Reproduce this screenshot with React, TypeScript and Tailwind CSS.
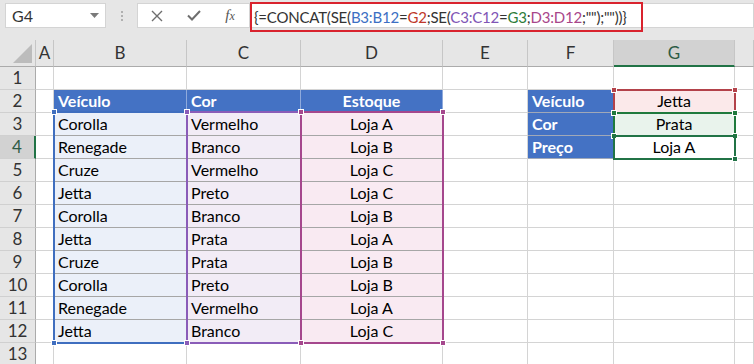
import React from 'react';

const COLS = ['A', 'B', 'C', 'D', 'E', 'F', 'G', 'H'];

const DATA: [string, string, string][] = [
  ['Corolla', 'Vermelho', 'Loja A'],
  ['Renegade', 'Branco', 'Loja B'],
  ['Cruze', 'Vermelho', 'Loja C'],
  ['Jetta', 'Preto', 'Loja C'],
  ['Corolla', 'Branco', 'Loja B'],
  ['Jetta', 'Prata', 'Loja A'],
  ['Cruze', 'Prata', 'Loja B'],
  ['Corolla', 'Preto', 'Loja B'],
  ['Renegade', 'Vermelho', 'Loja A'],
  ['Jetta', 'Branco', 'Loja C'],
];

const LOOKUP: Record<number, [string, string]> = {
  2: ['Veículo', 'Jetta'],
  3: ['Cor', 'Prata'],
  4: ['Preço', 'Loja A'],
};

const base =
  'border-r border-b border-[#d4d4d4] text-[16px] leading-[22px] whitespace-nowrap overflow-hidden text-black px-[4px] flex items-end';

function cellInfo(row: number, col: string): { text: string; cls: string } {
  // table B2:D12
  if (row === 2 && (col === 'B' || col === 'C' || col === 'D')) {
    const text = col === 'B' ? 'Veículo' : col === 'C' ? 'Cor' : 'Estoque';
    return {
      text,
      cls:
        col === 'D'
          ? 'border-b border-r border-[#8faadc] bg-[#4472c4] text-white font-bold text-[16px] leading-[22px] flex items-end justify-center'
          : 'border-b border-r border-[#8faadc] bg-[#4472c4] text-white font-bold text-[16px] leading-[22px] flex items-end px-[4px]',
    };
  }
  if (row >= 3 && row <= 12) {
    const d = DATA[row - 3];
    if (col === 'B') return { text: d[0], cls: base + ' bg-[#ebf0f9] border-b-[#a6a6a6] border-r-[#a6a6a6]' };
    if (col === 'C') return { text: d[1], cls: base + ' bg-[#f2ecf6] border-b-[#a6a6a6] border-r-[#a6a6a6]' };
    if (col === 'D') return { text: d[2], cls: base + ' bg-[#f9eaf2] border-b-[#a6a6a6] border-r-[#a6a6a6] justify-center' };
  }
  const lk = LOOKUP[row];
  if (lk && col === 'F') {
    return {
      text: lk[0],
      cls: 'border-b border-r border-b-[#a0a8b8] border-r-[#a0a8b8] bg-[#4472c4] text-white font-bold text-[16px] leading-[22px] flex items-end px-[4px]',
    };
  }
  if (lk && col === 'G') {
    const bg = row === 2 ? ' bg-[#fbe9ea]' : row === 3 ? ' bg-[#e9f3ec]' : ' bg-white';
    return { text: lk[1], cls: base + bg + ' justify-center' };
  }
  return { text: '', cls: base + ' bg-white' };
}

function Handle({ x, y, color }: { x: number; y: number; color: string }) {
  return (
    <div
      className="absolute w-[6px] h-[6px] border border-white"
      style={{ left: x - 3, top: y - 3, backgroundColor: color }}
    />
  );
}

function Range({
  x,
  y,
  w,
  h,
  color,
  corners,
}: {
  x: number;
  y: number;
  w: number;
  h: number;
  color: string;
  corners: ('tl' | 'tr' | 'bl' | 'br')[];
}) {
  return (
    <>
      <div
        className="absolute border-2 pointer-events-none"
        style={{ left: x - 1, top: y - 1, width: w + 2, height: h + 2, borderColor: color }}
      />
      {corners.includes('tl') && <Handle x={x} y={y} color={color} />}
      {corners.includes('tr') && <Handle x={x + w} y={y} color={color} />}
      {corners.includes('bl') && <Handle x={x} y={y + h} color={color} />}
      {corners.includes('br') && <Handle x={x + w} y={y + h} color={color} />}
    </>
  );
}

function Formula() {
  return (
    <span className="text-[15px] text-[#333] tracking-[-0.2px]">
      {'{=CONCAT(SE('}
      <span className="text-[#3c6fc3]">B3:B12</span>
      {'='}
      <span className="text-[#c0392b]">G2</span>
      {';SE('}
      <span className="text-[#7f55b5]">C3:C12</span>
      {'='}
      <span className="text-[#2e7d3a]">G3</span>
      {';'}
      <span className="text-[#a8468a]">D3:D12</span>
      {';"");""))}'}
    </span>
  );
}

export default function App() {
  const rows = Array.from({ length: 13 }, (_, i) => i + 1);

  return (
    <div className="w-[754px] h-[364px] overflow-hidden bg-white font-['Lato',sans-serif]">
      {/* formula bar */}
      <div className="h-[40px] bg-[#e6e6e6] flex items-start pt-[3px] pl-[5px]">
        <div className="w-[101px] h-[25px] bg-white border border-[#d4d4d4] flex items-center justify-between px-[6px]">
          <span className="text-[16px] text-[#333]">G4</span>
          <svg width="9" height="5" viewBox="0 0 9 5">
            <path d="M0 0 L9 0 L4.5 5 Z" fill="#7a7a7a" />
          </svg>
        </div>
        <div className="w-[31px] h-[25px] flex flex-col items-center justify-center gap-[2px]">
          <span className="w-[2px] h-[2px] bg-[#b0b0b0]" />
          <span className="w-[2px] h-[2px] bg-[#b0b0b0]" />
          <span className="w-[2px] h-[2px] bg-[#b0b0b0]" />
        </div>
        <div className="w-[113px] h-[25px] bg-white border border-[#d4d4d4] flex items-center">
          <div className="w-[38px] flex justify-center">
            <svg width="12" height="12" viewBox="0 0 12 12">
              <path d="M1 1 L11 11 M11 1 L1 11" stroke="#6e6e6e" strokeWidth="1.4" />
            </svg>
          </div>
          <div className="w-[36px] flex justify-center">
            <svg width="14" height="11" viewBox="0 0 14 11">
              <path d="M1 5.5 L5 9.5 L13 1" stroke="#6e6e6e" strokeWidth="2" fill="none" />
            </svg>
          </div>
          <div className="w-[36px] flex justify-center">
            <span className="font-['Liberation_Serif',serif] italic text-[15px] text-[#555]">
              f<span className="text-[12px]">x</span>
            </span>
          </div>
        </div>
        <div className="flex-1 h-[25px] bg-white border border-[#d4d4d4] border-l-0">
          <div className="w-[393px] h-[30px] -mt-[2px] border-2 border-[#d9232e] flex items-center pl-[2px]">
            <Formula />
          </div>
        </div>
      </div>

      {/* sheet */}
      <div className="relative">
        <div className="grid grid-cols-[36px_18px_133px_114px_142px_85px_86px_121px_19px] grid-rows-[27px_repeat(13,23px)]">
          {/* header row */}
          <div className="bg-[#e6e6e6] border-r border-b border-r-[#c6c6c6] border-b-[#ababab] flex items-end justify-end p-[3px]">
            <svg width="19" height="19" viewBox="0 0 19 19">
              <path d="M19 0 L19 19 L0 19 Z" fill="#bcbcbc" />
            </svg>
          </div>
          {COLS.map((c) =>
            c === 'G' ? (
              <div
                key={c}
                className="bg-[#d2d2d2] border-r border-b-2 border-r-[#c6c6c6] border-b-[#217346] flex items-center justify-center text-[17px] text-[#2d5b45]"
              >
                {c}
              </div>
            ) : (
              <div
                key={c}
                className="bg-[#e6e6e6] border-r border-b border-r-[#c6c6c6] border-b-[#ababab] flex items-center justify-center text-[17px] text-[#333]"
              >
                {c === 'H' ? '' : c}
              </div>
            )
          )}

          {rows.map((r) => (
            <React.Fragment key={r}>
              {r === 4 ? (
                <div className="bg-[#d2d2d2] border-r-2 border-b border-r-[#217346] border-b-[#d0d0d0] flex items-center justify-center text-[17px] text-[#2d5b45]">
                  {r}
                </div>
              ) : (
                <div className="bg-[#e6e6e6] border-r border-b border-r-[#ababab] border-b-[#d0d0d0] flex items-center justify-center text-[17px] text-[#333]">
                  {r}
                </div>
              )}
              {COLS.map((c) => {
                const { text, cls } = cellInfo(r, c);
                return (
                  <div key={c} className={cls}>
                    {text}
                  </div>
                );
              })}
            </React.Fragment>
          ))}
        </div>

        {/* reference highlights */}
        <Range x={54} y={72} w={133} h={231} color="#3f6ebf" corners={['tl', 'bl']} />
        <Range x={187} y={72} w={114} h={231} color="#8a5cb8" corners={['tl', 'bl']} />
        <Range x={301} y={72} w={142} h={231} color="#a5478d" corners={['tl', 'tr', 'bl', 'br']} />
        <Range x={614} y={50} w={121} h={23} color="#b3424a" corners={['tl', 'tr']} />
        <Range x={614} y={73} w={121} h={23} color="#1f7a3d" corners={['tl', 'tr', 'bl', 'br']} />
        <Range x={614} y={96} w={121} h={23} color="#217346" corners={['br']} />
      </div>
    </div>
  );
}
